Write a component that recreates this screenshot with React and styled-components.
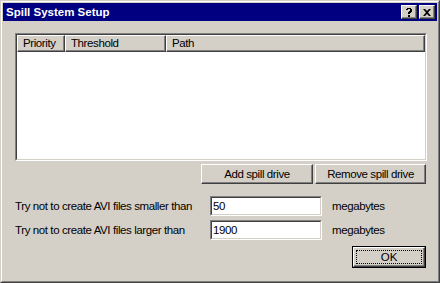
import React from "react";
import styled, { createGlobalStyle } from "styled-components";

const Global = createGlobalStyle`
  html, body { margin: 0; padding: 0; background: #d4d0c8; }
  * { box-sizing: border-box; }
`;

const face = `"Liberation Sans", Arial, sans-serif`;

const Window = styled.div`
  width: 440px;
  height: 283px;
  background: #d4d0c8;
  border-top: 1px solid #d4d0c8;
  border-left: 1px solid #d4d0c8;
  border-right: 1px solid #404040;
  border-bottom: 1px solid #404040;
  font-family: ${face};
  font-size: 11.5px;
  letter-spacing: -0.4px;
  color: #000;
`;

const Inner = styled.div`
  height: 100%;
  border-top: 1px solid #fff;
  border-left: 1px solid #fff;
  border-right: 1px solid #808080;
  border-bottom: 1px solid #808080;
  padding: 1px;
  display: flex;
  flex-direction: column;
`;

const TitleBar = styled.div`
  height: 18px;
  background: #000080;
  display: flex;
  align-items: center;
  padding: 0 2px 0 2px;
`;

const Title = styled.div`
  flex: 1;
  color: #fff;
  font-family: "Liberation Sans", "DejaVu Sans", sans-serif;
  font-weight: bold;
  font-size: 11.5px;
  letter-spacing: 0;
  padding-left: 1px;
`;

const CapButton = styled.div`
  width: 16px;
  height: 14px;
  margin-left: ${(p) => (p.gap ? "2px" : "0")};
  background: #d4d0c8;
  border-top: 1px solid #fff;
  border-left: 1px solid #fff;
  border-right: 1px solid #404040;
  border-bottom: 1px solid #404040;
  box-shadow: inset -1px -1px 0 #808080;
  display: flex;
  align-items: center;
  justify-content: center;
`;

const Body = styled.div`
  padding: 12px 10px 0 12px;
  display: flex;
  flex-direction: column;
`;

const ListView = styled.div`
  width: 412px;
  height: 128px;
  background: #fff;
  border-top: 1px solid #808080;
  border-left: 1px solid #808080;
  border-right: 1px solid #fff;
  border-bottom: 1px solid #fff;
`;

const ListInner = styled.div`
  height: 100%;
  border-top: 1px solid #404040;
  border-left: 1px solid #404040;
  border-right: 1px solid #d4d0c8;
  border-bottom: 1px solid #d4d0c8;
`;

const Header = styled.div`
  display: flex;
  height: 17px;
`;

const Col = styled.div`
  width: ${(p) => p.w}px;
  flex: ${(p) => (p.grow ? 1 : "none")};
  background: #d4d0c8;
  border-top: 1px solid #fff;
  border-left: 1px solid #fff;
  border-right: 1px solid #404040;
  border-bottom: 1px solid #404040;
  box-shadow: inset -1px -1px 0 #808080;
  padding-left: 5px;
  line-height: 14px;
  white-space: nowrap;
`;

const ButtonRow = styled.div`
  display: flex;
  justify-content: flex-end;
  gap: 2px;
  margin-top: 3px;
  padding-right: 1px;
`;

const Button = styled.button`
  width: ${(p) => p.w}px;
  height: 20px;
  padding: 0;
  background: #d4d0c8;
  font-family: ${face};
  font-size: 11.5px;
  letter-spacing: -0.4px;
  color: #000;
  border-top: 1px solid #fff;
  border-left: 1px solid #fff;
  border-right: 1px solid #404040;
  border-bottom: 1px solid #404040;
  box-shadow: inset -1px -1px 0 #808080;
`;

const DefaultButton = styled.button`
  width: 74px;
  height: 22px;
  padding: 0;
  background: #d4d0c8;
  border: 1px solid #000;
  font-family: ${face};
  font-size: 11.5px;
  color: #000;
  display: flex;
`;

const DefaultFace = styled.span`
  flex: 1;
  border-top: 1px solid #fff;
  border-left: 1px solid #fff;
  border-right: 1px solid #404040;
  border-bottom: 1px solid #404040;
  box-shadow: inset -1px -1px 0 #808080;
  padding: 2px;
  display: flex;
`;

const Focus = styled.span`
  flex: 1;
  border: 1px dotted #000;
  display: flex;
  align-items: center;
  justify-content: center;
  line-height: 12px;
`;

const Form = styled.div`
  display: grid;
  grid-template-columns: 185px 112px auto;
  column-gap: 10px;
  row-gap: 4px;
  align-items: center;
  margin-top: 12px;
`;

const Label = styled.div`
  white-space: nowrap;
`;

const Field = styled.div`
  height: 20px;
  background: #fff;
  border-top: 1px solid #808080;
  border-left: 1px solid #808080;
  border-right: 1px solid #fff;
  border-bottom: 1px solid #fff;
`;

const FieldInner = styled.div`
  height: 100%;
  border-top: 1px solid #404040;
  border-left: 1px solid #404040;
  border-right: 1px solid #d4d0c8;
  border-bottom: 1px solid #d4d0c8;
  padding-left: 1px;
  line-height: 16px;
`;

const Footer = styled.div`
  display: flex;
  justify-content: flex-end;
  margin-top: 6px;
  padding-right: 1px;
`;

const fields = [
  { label: "Try not to create AVI files smaller than", value: "50" },
  { label: "Try not to create AVI files larger than", value: "1900" },
];

export default function App() {
  return (
    <>
      <Global />
      <Window>
        <Inner>
          <TitleBar>
            <Title>Spill System Setup</Title>
            <CapButton>
              <svg width="8" height="9" viewBox="0 0 8 9">
                <path d="M1 1h1V0h4v1h1v3H6v1H5v1H3V4h1V3h1V1H3v1H1z" fill="#000" />
                <rect x="3" y="7" width="2" height="2" fill="#000" />
              </svg>
            </CapButton>
            <CapButton gap>
              <svg width="8" height="7" viewBox="0 0 8 7">
                <path d="M0 0h2l2 2 2-2h2L5 3.5 8 7H6L4 5 2 7H0l3-3.5z" fill="#000" />
              </svg>
            </CapButton>
          </TitleBar>
          <Body>
            <ListView>
              <ListInner>
                <Header>
                  <Col w={48}>Priority</Col>
                  <Col w={101}>Threshold</Col>
                  <Col grow>Path</Col>
                </Header>
              </ListInner>
            </ListView>
            <ButtonRow>
              <Button w={112}>Add spill drive</Button>
              <Button w={111}>Remove spill drive</Button>
            </ButtonRow>
            <Form>
              {fields.map((f) => (
                <React.Fragment key={f.label}>
                  <Label>{f.label}</Label>
                  <Field>
                    <FieldInner>{f.value}</FieldInner>
                  </Field>
                  <Label>megabytes</Label>
                </React.Fragment>
              ))}
            </Form>
            <Footer>
              <DefaultButton>
                <DefaultFace>
                  <Focus>OK</Focus>
                </DefaultFace>
              </DefaultButton>
            </Footer>
          </Body>
        </Inner>
      </Window>
    </>
  );
}
